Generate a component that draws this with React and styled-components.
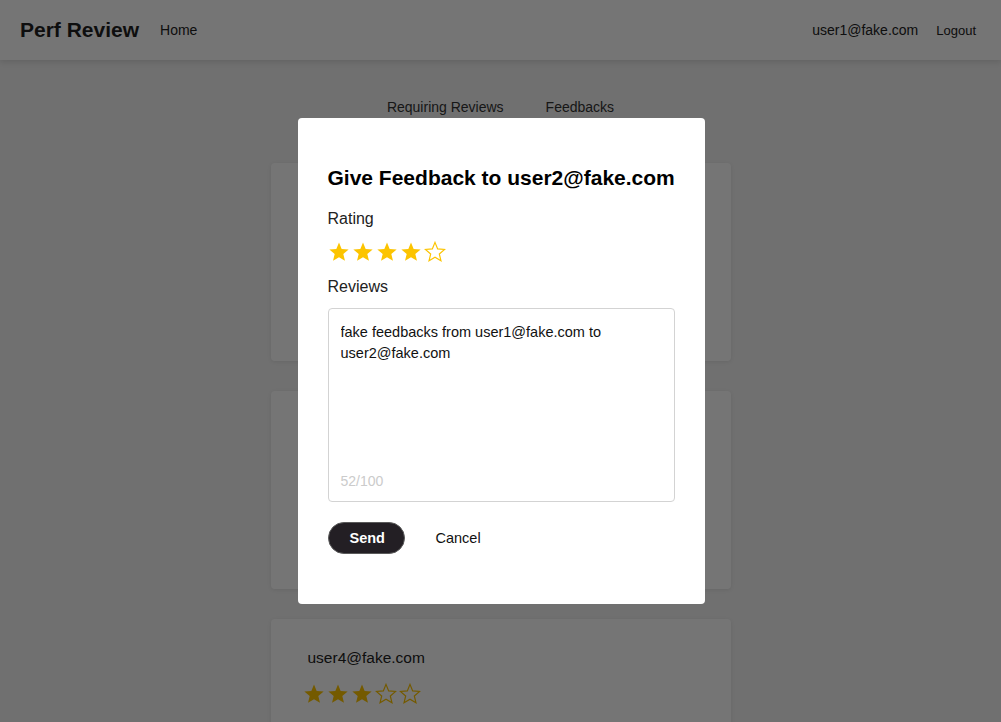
import React from "react";
import styled, { createGlobalStyle } from "styled-components";

const GlobalStyle = createGlobalStyle`
  body {
    margin: 0;
    background: #f3f3f3;
    font-family: "Liberation Sans", Arial, sans-serif;
    color: #222;
    overflow: hidden;
  }
`;

const Header = styled.header`
  height: 60px;
  background: #fff;
  box-shadow: 0 2px 6px rgba(0, 0, 0, 0.12);
  display: flex;
  align-items: center;
  padding: 0 25px 0 20px;
`;

const Logo = styled.h1`
  margin: 0 21px 0 0;
  font-size: 21px;
  font-weight: 700;
  color: #1f1f1f;
`;

const NavLink = styled.a`
  font-size: ${(p) => (p.small ? "13px" : "14px")};
  color: #222;
  text-decoration: none;
  margin-left: ${(p) => p.gap || 0}px;
`;

const Spacer = styled.div`
  flex: 1;
`;

const Tabs = styled.nav`
  display: flex;
  justify-content: center;
  gap: 42px;
  margin-top: 39px;
  font-size: 14px;
  color: #333;
`;

const CardList = styled.main`
  display: flex;
  flex-direction: column;
  align-items: center;
  gap: 30px;
  margin-top: 48px;
`;

const Card = styled.section`
  width: 460px;
  height: 198px;
  box-sizing: border-box;
  padding: 30px 37px;
  background: #fff;
  border-radius: 4px;
  box-shadow: 0 1px 4px rgba(0, 0, 0, 0.08);
`;

const CardEmail = styled.div`
  font-size: 15.5px;
  color: #222;
  margin-bottom: 16px;
`;

const StarRow = styled.div`
  display: flex;
  gap: 2px;
  margin-left: ${(p) => p.offset || 0}px;
`;

const Overlay = styled.div`
  position: fixed;
  inset: 0;
  background: rgba(0, 0, 0, 0.54);
  display: flex;
  align-items: center;
  justify-content: center;
`;

const Modal = styled.div`
  width: 407px;
  height: 486px;
  box-sizing: border-box;
  background: #fff;
  border-radius: 4px;
  padding: 47px 30px 0;
  margin-left: 1px;
`;

const Title = styled.h2`
  margin: 0 0 18px;
  font-size: 21px;
  line-height: 26px;
  font-weight: 700;
  color: #000;
  white-space: nowrap;
`;

const Label = styled.div`
  font-size: 16px;
  line-height: 20px;
  color: #222;
  margin-bottom: ${(p) => p.mb}px;
`;

const ModalStars = styled(StarRow)`
  margin-bottom: 14px;
`;

const TextBox = styled.div`
  height: 194px;
  box-sizing: border-box;
  border: 1px solid #d3d3d3;
  border-radius: 4px;
  display: flex;
  flex-direction: column;
  padding: 13px 12px 12px;
`;

const TextArea = styled.textarea`
  flex: 1;
  border: none;
  outline: none;
  resize: none;
  padding: 0;
  font-family: "Liberation Sans", Arial, sans-serif;
  font-size: 14.5px;
  line-height: 21px;
  color: #111;
`;

const Counter = styled.div`
  font-size: 14px;
  color: #cbcbcb;
`;

const Actions = styled.div`
  display: flex;
  align-items: center;
  gap: 14px;
  margin-top: 20px;
`;

const Button = styled.button`
  font-family: "Liberation Sans", Arial, sans-serif;
  font-size: 14.5px;
  height: 32px;
  cursor: pointer;
  border-radius: 16px;
  padding: 0 ${(p) => (p.primary ? "21px" : "16px")};
  border: 1px solid ${(p) => (p.primary ? "#5a5a5a" : "transparent")};
  background: ${(p) => (p.primary ? "#231f24" : "transparent")};
  color: ${(p) => (p.primary ? "#fff" : "#111")};
  font-weight: ${(p) => (p.primary ? 700 : 400)};
  width: ${(p) => (p.primary ? "77px" : "auto")};
`;

function Star({ filled, size = 22 }) {
  const pts = "12,1.5 14.9,8.6 22.5,9.2 16.7,14.1 18.5,21.6 12,17.6 5.5,21.6 7.3,14.1 1.5,9.2 9.1,8.6";
  return (
    <svg width={size} height={size} viewBox="0 0 24 24">
      <polygon
        points={pts}
        fill={filled ? "#fcc400" : "none"}
        stroke="#fcc400"
        strokeWidth={filled ? 0 : 1.3}
        strokeLinejoin="miter"
      />
    </svg>
  );
}

function Stars({ value, offset }) {
  return (
    <StarRow offset={offset}>
      {[1, 2, 3, 4, 5].map((n) => (
        <Star key={n} filled={n <= value} />
      ))}
    </StarRow>
  );
}

const reviews = [
  { email: "user2@fake.com", rating: 4 },
  { email: "user3@fake.com", rating: 5 },
  { email: "user4@fake.com", rating: 3 },
];

export default function App() {
  return (
    <>
      <GlobalStyle />
      <Header>
        <Logo>Perf Review</Logo>
        <NavLink href="#">Home</NavLink>
        <Spacer />
        <NavLink href="#">user1@fake.com</NavLink>
        <NavLink href="#" small gap={18}>
          Logout
        </NavLink>
      </Header>
      <Tabs>
        <span>Requiring Reviews</span>
        <span>Feedbacks</span>
      </Tabs>
      <CardList>
        {reviews.map((r) => (
          <Card key={r.email}>
            <CardEmail>{r.email}</CardEmail>
            <Stars value={r.rating} offset={-5} />
          </Card>
        ))}
      </CardList>
      <Overlay>
        <Modal>
          <Title>Give Feedback to user2@fake.com</Title>
          <Label mb={12}>Rating</Label>
          <ModalStars>
            {[1, 2, 3, 4, 5].map((n) => (
              <Star key={n} filled={n <= 4} />
            ))}
          </ModalStars>
          <Label mb={11}>Reviews</Label>
          <TextBox>
            <TextArea defaultValue="fake feedbacks from user1@fake.com to user2@fake.com" />
            <Counter>52/100</Counter>
          </TextBox>
          <Actions>
            <Button primary>Send</Button>
            <Button>Cancel</Button>
          </Actions>
        </Modal>
      </Overlay>
    </>
  );
}
